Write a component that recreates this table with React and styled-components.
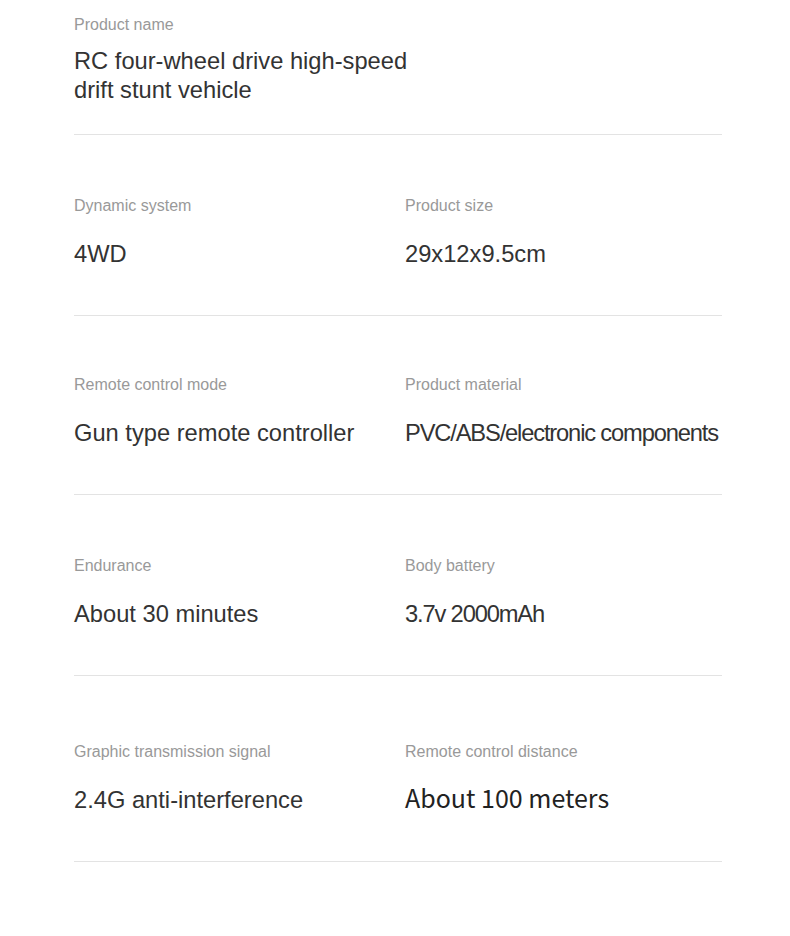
import { createGlobalStyle, styled } from 'styled-components'

const Global = createGlobalStyle`
  body {
    margin: 0;
    background: #fff;
    font-family: "Liberation Sans", Arial, sans-serif;
  }
`;

const Page = styled.div`
  width: 648px;
  padding: 16px 0 74px 74px;
`;

const Head = styled.div`
  padding-bottom: 29px;
  border-bottom: 1px solid #e3e3e3;
`;

const Row = styled.div`
  display: grid;
  grid-template-columns: 331px 1fr;
  padding: ${props => props.$top || 61}px 0 46px;
  border-bottom: 1px solid #e3e3e3;
`;

const Label = styled.div`
  font-size: 16px;
  line-height: 18px;
  color: #999;
`;

const Value = styled.div`
  margin: ${props => props.$cjk ? '22px 0 3px' : '25px 0 0'};
  font-size: ${props => props.$cjk ? '25px' : '23.7px'};
  line-height: 29px;
  color: ${props => props.$cjk ? '#222' : '#333'};
  white-space: nowrap;
  letter-spacing: ${props => props.$tight ? '-1.15px' : '0'};
  font-family: ${props => props.$cjk
    ? '"Noto Sans CJK SC", "Noto Sans", sans-serif'
    : '"Liberation Sans", Arial, sans-serif'};
`;

const Title = styled(Value)`
  margin-top: 13px;
  width: 340px;
  white-space: normal;
`;

const specs = [
  { top: 62, items: [
    { label: 'Dynamic system', value: '4WD' },
    { label: 'Product size', value: '29x12x9.5cm' },
  ] },
  { top: 60, items: [
    { label: 'Remote control mode', value: 'Gun type remote controller' },
    { label: 'Product material', value: 'PVC/ABS/electronic components', tight: true },
  ] },
  { top: 62, items: [
    { label: 'Endurance', value: 'About 30 minutes' },
    { label: 'Body battery', value: '3.7v 2000mAh', tight: true },
  ] },
  { top: 67, items: [
    { label: 'Graphic transmission signal', value: '2.4G anti-interference' },
    { label: 'Remote control distance', value: 'About 100 meters', cjk: true },
  ] },
];

const App = () => (
  <>
    <Global />
    <Page>
      <Head>
        <Label>Product name</Label>
        <Title>RC four-wheel drive high-speed drift stunt vehicle</Title>
      </Head>
      {specs.map((row, i) => (
        <Row key={i} $top={row.top}>
          {row.items.map(item => (
            <div key={item.label}>
              <Label>{item.label}</Label>
              <Value $tight={item.tight} $cjk={item.cjk}>{item.value}</Value>
            </div>
          ))}
        </Row>
      ))}
    </Page>
  </>
);

export default App;
